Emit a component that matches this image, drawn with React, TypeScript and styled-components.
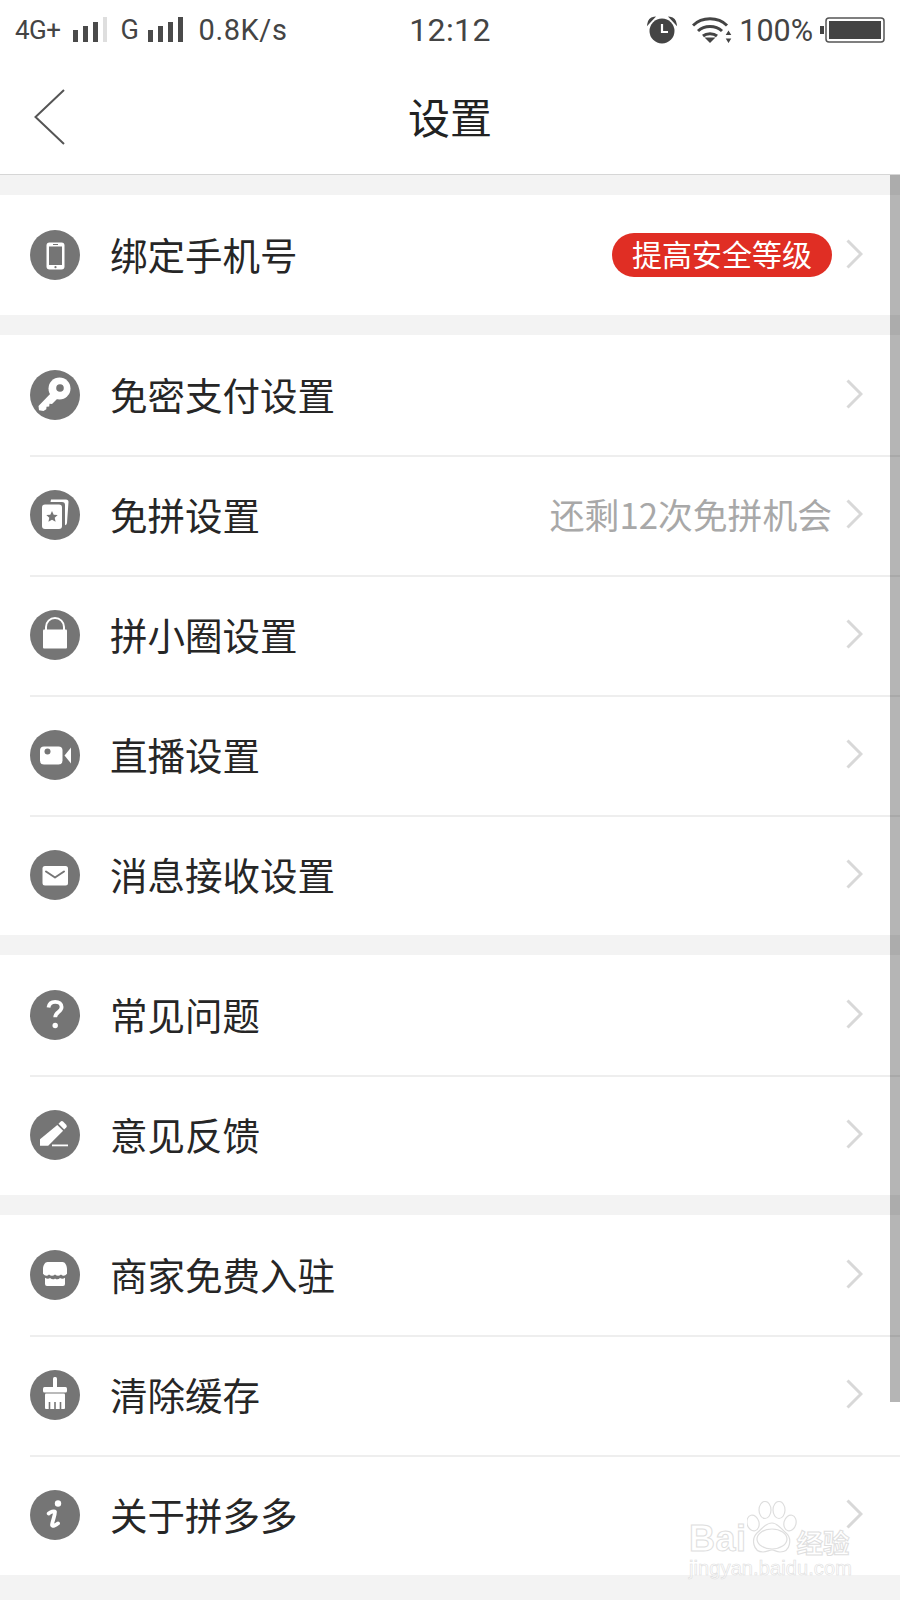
import React from "react";
import styled, { createGlobalStyle } from "styled-components";

const Global = createGlobalStyle`
  html, body { margin: 0; padding: 0; background: #f3f3f3; }
  body { font-family: Roboto, "Noto Sans CJK SC", sans-serif; }
  #root { width: 900px; height: 1600px; overflow: hidden; }
`;

const Page = styled.div`
  position: relative;
  width: 900px;
  height: 1600px;
  overflow: hidden;
  background: #f3f3f3;
  display: flex;
  flex-direction: column;
`;

const Header = styled.header`
  background: #fff;
  border-bottom: 1px solid #d6d6d6;
  height: 175px;
  box-sizing: border-box;
  display: flex;
  flex-direction: column;
`;

const StatusBar = styled.div`
  height: 60px;
  display: grid;
  grid-template-columns: 1fr auto 1fr;
  align-items: center;
  padding: 0 15px;
  color: #444;
`;

const StatusGroup = styled.div<{ $end?: boolean }>`
  display: flex;
  align-items: center;
  justify-content: ${(p) => (p.$end ? "flex-end" : "flex-start")};
`;

const NetworkLabel = styled.span<{ $size: number; $before: number; $gap: number }>`
  font-size: ${(p) => p.$size}px;
  line-height: 30px;
  margin-left: ${(p) => p.$before}px;
  margin-right: ${(p) => p.$gap}px;
  letter-spacing: -0.5px;
`;

const Speed = styled.span`
  font-size: 29px;
  letter-spacing: 0.6px;
  margin-left: 15px;
`;

const Clock = styled.span`
  font-size: 32px;
  letter-spacing: 0.4px;
`;

const Percent = styled.span`
  font-size: 30.5px;
  margin: 0 7px 0 7px;
`;

const AlarmSlot = styled.span`
  display: flex;
  margin-right: 14px;
`;

const Nav = styled.nav`
  flex: 1;
  position: relative;
  display: flex;
  align-items: center;
  justify-content: center;
`;

const Title = styled.h1`
  margin: 0 0 2px;
  font: 400 42px/1 "Noto Sans CJK SC", sans-serif;
  color: #222;
`;

const BackIcon = styled.svg`
  position: absolute;
  left: 30px;
  top: 28px;
`;

const Sections = styled.main`
  padding-top: 20px;
  display: flex;
  flex-direction: column;
  gap: 20px;
`;

const Section = styled.section`
  background: #fff;
  display: flex;
  flex-direction: column;
`;

const Row = styled.div<{ $divider: boolean }>`
  position: relative;
  height: 120px;
  display: flex;
  align-items: center;
  padding-left: 30px;
  &::after {
    content: "";
    display: ${(p) => (p.$divider ? "block" : "none")};
    position: absolute;
    left: 30px;
    right: 0;
    bottom: -2px;
    height: 2px;
    background: #eeeeee;
  }
`;

const Circle = styled.svg`
  width: 50px;
  height: 50px;
  flex: none;
`;

const Label = styled.span`
  margin: 0 0 3px 30px;
  font: 400 37.5px/1 "Noto Sans CJK SC", sans-serif;
  color: #262626;
`;

const RowEnd = styled.div`
  margin-left: auto;
  display: flex;
  align-items: center;
`;

const Hint = styled.span`
  margin-bottom: 2px;
  font: 400 34.8px/1 "Noto Sans CJK SC", sans-serif;
  color: #a8a8a8;
`;

const Badge = styled.span`
  width: 220px;
  height: 44px;
  border-radius: 22px;
  background: #e02e24;
  color: #fff;
  font: 400 30px/41px "Noto Sans CJK SC", sans-serif;
  text-align: center;
`;

const Chevron = styled.svg`
  flex: none;
  margin: 0 37px 2px 14px;
`;

const Scrollbar = styled.div`
  position: absolute;
  right: 0;
  top: 175px;
  width: 10px;
  height: 1227px;
  background: rgba(0, 0, 0, 0.29);
`;

const Watermark = styled.div`
  position: absolute;
  left: 689px;
  top: 1502px;
  width: 170px;
  color: rgba(255, 255, 255, 0.6);
  -webkit-text-stroke: 1px #dedede;
  pointer-events: none;
`;

const MarkTop = styled.div`
  display: flex;
  align-items: flex-end;
  height: 54px;
`;

const MarkBai = styled.span`
  font: 700 36px/34px "Liberation Sans", sans-serif;
  letter-spacing: 0.5px;
`;

const MarkCn = styled.span`
  font: 700 26.5px/28px "Noto Sans CJK SC", sans-serif;
`;

const MarkUrl = styled.div`
  margin-top: 1px;
  font: 400 20px/22px "Liberation Sans", sans-serif;
  letter-spacing: 0.1px;
  -webkit-text-stroke: 0.6px #dedede;
`;

const G = "#757575";

const Base: React.FC<{ children: React.ReactNode }> = ({ children }) => (
  <Circle viewBox="0 0 50 50">
    <circle cx="25" cy="25" r="25" fill={G} />
    {children}
  </Circle>
);

const icons: Record<string, React.ReactNode> = {
  phone: (
    <>
      <rect x="16.5" y="12.5" width="18" height="27" rx="3" fill="#fff" />
      <rect x="19" y="16.5" width="13" height="18.5" fill={G} />
      <circle cx="25.5" cy="37.2" r="1.1" fill={G} />
      <rect x="23" y="14" width="5" height="1" fill={G} />
    </>
  ),
  key: (
    <>
      <circle cx="29.5" cy="18.5" r="11" fill="#fff" />
      <path d="M22 22l6 6-6 6-2.500-.3-.3 2.800-2.700.2-.2 2.600-2.800 1.700-4.500-.8-.5-4.200z" fill="#fff" />
      <circle cx="30" cy="18" r="3.800" fill={G} />
    </>
  ),
  cards: (
    <>
      <path d="M21 9.500h15a2.500 2.500 0 0 1 2.500 2.500l-1.500 21a2.500 2.500 0 0 1-2 2.200V15a3 3 0 0 0-3-3H20.500z" fill="#fff" />
      <path d="M15 14.500h14a3 3 0 0 1 3 3V36a3 3 0 0 1-3 3H15a3 3 0 0 1-3-3V17.500a3 3 0 0 1 3-3z" fill="#fff" />
      <path d="M22 21l1.700 3.700 4 .4-3 2.700.9 4-3.600-2.100-3.600 2.100.9-4-3-2.700 4-.4z" fill={G} />
    </>
  ),
  lock: (
    <>
      <path d="M16 20v-3a9 9 0 0 1 18 0v3" fill="none" stroke="#fff" strokeWidth="2" />
      <rect x="13" y="19.500" width="24" height="19" rx="1" fill="#fff" />
    </>
  ),
  video: (
    <>
      <rect x="10" y="16.500" width="22.500" height="18" rx="4" fill="#fff" />
      <circle cx="17.500" cy="21.500" r="3" fill={G} />
      <path d="M34.500 25.500l6.500-8v16z" fill="#fff" />
    </>
  ),
  mail: (
    <>
      <rect x="12.500" y="16" width="25.500" height="19.500" rx="2.500" fill="#fff" />
      <path d="M16 21.500l9 6 9-6" fill="none" stroke={G} strokeWidth="2" strokeLinecap="round" strokeLinejoin="round" />
    </>
  ),
  question: (
    <>
      <path d="M18.500 17.500c.5-3.800 3-5.700 6.700-5.700 3.900 0 6.400 2.200 6.400 5.300 0 5-6.400 5-6.400 10.200" fill="none" stroke="#fff" strokeWidth="3.800" />
      <circle cx="25.200" cy="35.500" r="2.700" fill="#fff" />
    </>
  ),
  pencil: (
    <>
      <path d="M30.500 11.800a2 2 0 0 1 2.800 0l2.900 2.900a2 2 0 0 1 0 2.800l-2 2-5.700-5.700z" fill="#fff" />
      <path d="M27.300 14.900l5.800 5.800-14.900 15.100H10v-6.500z" fill="#fff" />
      <rect x="22" y="34.500" width="16" height="1.800" fill="#fff" />
    </>
  ),
  store: (
    <>
      <path d="M17.500 12h15c2.500 0 4.500 3.500 4.500 7v4.800c-2 2.500-4.300 2.500-6 .6-2 1.900-4 1.900-6 0-2 1.900-4 1.900-6 0-1.700 1.900-4 1.900-6-.6V19c0-3.500 2-7 4.500-7z" fill="#fff" />
      <path d="M15 27.800c1.800 1.300 3.800 1.300 5 .3 2 1.500 4 1.500 5 .3 1.500 1.200 3.500 1.200 5-.3 1.500 1 3.500 1 5-.3v6.200a2 2 0 0 1-2 2H17a2 2 0 0 1-2-2z" fill="#fff" />
    </>
  ),
  brush: (
    <>
      <rect x="23" y="7" width="4" height="12" rx="1.500" fill="#fff" />
      <rect x="13" y="17" width="24" height="5.500" rx="1.500" fill="#fff" />
      <rect x="15" y="23.500" width="20" height="15.500" rx="1" fill="#fff" />
      <path d="M19.500 32v7M25 32v7M30.500 32v7" stroke={G} strokeWidth="1.600" />
    </>
  ),
  info: (
    <>
      <circle cx="28" cy="13.500" r="3.200" fill="#fff" />
      <path d="M18.700 23.500c1.800-1.500 5.500-2.800 6.300-1.600.7 1.100-3.200 11-3 13.300.1 1.500 3.800.3 6-1.800" fill="none" stroke="#fff" strokeWidth="3.800" strokeLinecap="round" />
    </>
  ),
};

type Item = { label: string; icon: string; badge?: string; hint?: string };

const sections: Item[][] = [
  [{ label: "绑定手机号", icon: "phone", badge: "提高安全等级" }],
  [
    { label: "免密支付设置", icon: "key" },
    { label: "免拼设置", icon: "cards", hint: "还剩12次免拼机会" },
    { label: "拼小圈设置", icon: "lock" },
    { label: "直播设置", icon: "video" },
    { label: "消息接收设置", icon: "mail" },
  ],
  [
    { label: "常见问题", icon: "question" },
    { label: "意见反馈", icon: "pencil" },
  ],
  [
    { label: "商家免费入驻", icon: "store" },
    { label: "清除缓存", icon: "brush" },
    { label: "关于拼多多", icon: "info" },
  ],
];

const Signal: React.FC<{ bars: number[]; faded?: boolean }> = ({ bars, faded }) => (
  <svg width="35" height="26" viewBox="0 0 35 26">
    {bars.map((h, i) => (
      <rect
        key={i}
        x={i * 10}
        y={25 - h}
        width={i === 3 && faded ? 4 : 5}
        height={h}
        fill={i === 3 && faded ? "#dedede" : "#4a4a4a"}
      />
    ))}
  </svg>
);

const Alarm = () => (
  <svg width="32" height="28" viewBox="0 0 32 28">
    <circle cx="16" cy="15" r="12.500" fill="#444" />
    <path d="M2 8c.5-3.500 3-6 6-6.500L2 8zM30 8c-.5-3.500-3-6-6-6.500L30 8z" fill="#444" stroke="#444" strokeWidth="1.500" />
    <path d="M16 8v8h6" fill="none" stroke="#fff" strokeWidth="2.200" />
  </svg>
);

const Wifi = () => (
  <svg width="40" height="28" viewBox="0 0 40 28">
    <g fill="none" stroke="#444" strokeWidth="3">
      <path d="M1 9.500C10 .5 26 .5 35 9.500" />
      <path d="M6 15c6.500-6 17.500-6 24 0" />
      <path d="M11 20c3.500-3 10.500-3 14 0" />
    </g>
    <path d="M12.500 21.500h11l-5.500 5.500z" fill="#444" />
    <path d="M36.500 14.500l2.800 4.500h-5.600zM36.500 27l-2.800-4.500h5.600z" fill="#444" />
  </svg>
);

const Battery = () => (
  <svg width="65" height="26" viewBox="0 0 65 26">
    <path d="M1 9h3v8H1a4 4 0 0 1 0-8z" fill="#444" />
    <rect x="6" y="1" width="58" height="24" rx="3" fill="none" stroke="#555" strokeWidth="1.500" />
    <rect x="9" y="4" width="52" height="18" fill="#444" />
  </svg>
);

const Paw = () => (
  <svg width="50" height="55" viewBox="0 0 50 55" fill="rgba(255,255,255,0.6)" stroke="#dedede" strokeWidth="1.200">
    <ellipse cx="6" cy="22" rx="6" ry="8" transform="rotate(-15 6 22)" />
    <ellipse cx="18" cy="9" rx="6" ry="8.500" />
    <ellipse cx="32" cy="9" rx="6" ry="8.500" />
    <ellipse cx="43" cy="22" rx="6" ry="8" transform="rotate(15 43 22)" />
    <path d="M25 22c6 0 9 6 14 10 6 5 5 19-6 19-4 0-5-2-8-2s-5 2-9 2c-10 0-12-13-6-19 5-4 8-10 15-10z" />
    <ellipse cx="25" cy="38" rx="15" ry="10" />
  </svg>
);

export default function App() {
  return (
    <Page>
      <Global />
      <Header>
        <StatusBar>
          <StatusGroup>
            <NetworkLabel $size={26} $before={0} $gap={12}>4G+</NetworkLabel>
            <Signal bars={[12, 16, 20, 25]} faded />
            <NetworkLabel $size={27} $before={13} $gap={10}>G</NetworkLabel>
            <Signal bars={[12, 16, 20, 25]} />
            <Speed>0.8K/s</Speed>
          </StatusGroup>
          <Clock>12:12</Clock>
          <StatusGroup $end>
            <AlarmSlot>
              <Alarm />
            </AlarmSlot>
            <Wifi />
            <Percent>100%</Percent>
            <Battery />
          </StatusGroup>
        </StatusBar>
        <Nav>
          <BackIcon width="36" height="60" viewBox="0 0 36 60">
            <path d="M34 2L5.500 29 34 56" fill="none" stroke="#555" strokeWidth="2" />
          </BackIcon>
          <Title>设置</Title>
        </Nav>
      </Header>
      <Sections>
        {sections.map((items, s) => (
          <Section key={s}>
            {items.map((item, i) => (
              <Row key={item.label} $divider={i < items.length - 1}>
                <Base>{icons[item.icon]}</Base>
                <Label>{item.label}</Label>
                <RowEnd>
                  {item.badge && <Badge>{item.badge}</Badge>}
                  {item.hint && <Hint>{item.hint}</Hint>}
                  <Chevron width="17" height="30" viewBox="0 0 17 30">
                    <path d="M1.500 1.500L15 15 1.500 28.500" fill="none" stroke="#d8d8d8" strokeWidth="3" />
                  </Chevron>
                </RowEnd>
              </Row>
            ))}
          </Section>
        ))}
      </Sections>
      <Scrollbar />
      <Watermark>
        <MarkTop>
          <MarkBai>Bai</MarkBai>
          <Paw />
          <MarkCn>经验</MarkCn>
        </MarkTop>
        <MarkUrl>jingyan.baidu.com</MarkUrl>
      </Watermark>
    </Page>
  );
}
